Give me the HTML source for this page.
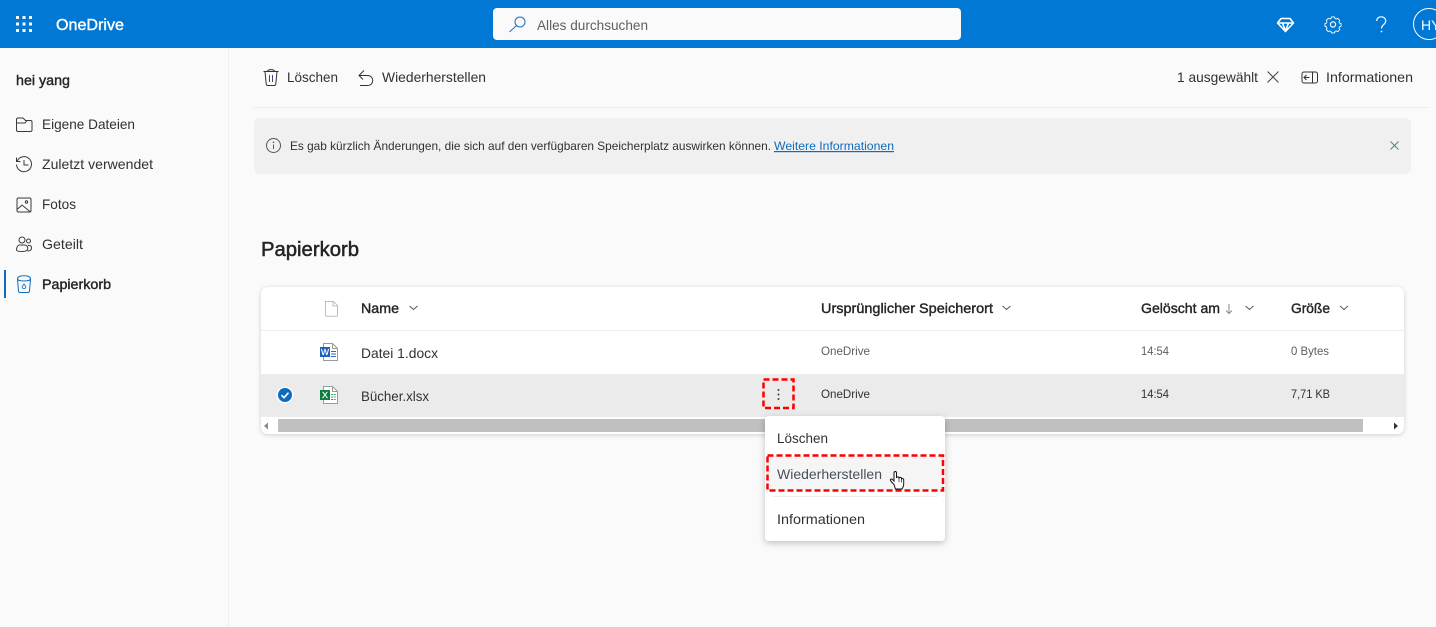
<!DOCTYPE html>
<html lang="de">
<head>
<meta charset="utf-8">
<title>OneDrive</title>
<style>
html,body{margin:0;padding:0;width:1436px;height:627px;overflow:hidden;background:#fafafa}
svg{display:block}
text{font-family:"Liberation Sans",sans-serif;font-size:14px;fill:#323130}
.b{fill:#252423;stroke:#252423;stroke-width:.4}
.s{font-size:12px;fill:#605e5c}
.ic{fill:none;stroke:#323130;stroke-width:1}
.nav{fill:none;stroke:#3b3a39;stroke-width:1}
</style>
</head>
<body>
<svg width="1436" height="627" viewBox="0 0 1436 627" xmlns="http://www.w3.org/2000/svg">
<defs>
<filter id="sh" x="-5%" y="-10%" width="110%" height="125%"><feDropShadow dx="0" dy="1" stdDeviation="2" flood-color="#000" flood-opacity=".18"/></filter>
<filter id="sh2" x="-10%" y="-10%" width="120%" height="125%"><feDropShadow dx="0" dy="2" stdDeviation="3.5" flood-color="#000" flood-opacity=".24"/></filter>
</defs>
<rect width="1436" height="627" fill="#fafafa"/>
<rect x="228" y="48" width="1" height="579" fill="#efefef"/>

<!-- Header -->
<rect width="1436" height="48" fill="#0078d4"/>
<g fill="#fff">
<rect x="16" y="16" width="3" height="3"/><rect x="22.500" y="16" width="3" height="3"/><rect x="29" y="16" width="3" height="3"/>
<rect x="16" y="22.500" width="3" height="3"/><rect x="22.500" y="22.500" width="3" height="3"/><rect x="29" y="22.500" width="3" height="3"/>
<rect x="16" y="29" width="3" height="3"/><rect x="22.500" y="29" width="3" height="3"/><rect x="29" y="29" width="3" height="3"/>
</g>
<text x="56" y="30" style="font-size:16px;fill:#fff;stroke:#fff;stroke-width:.4" textLength="68" lengthAdjust="spacingAndGlyphs">OneDrive</text>
<rect x="493" y="8" width="468" height="32" rx="4" fill="#fafafa"/>
<g fill="none" stroke="#1b6ec2" stroke-width="1"><circle cx="520" cy="22" r="5"/><path d="M516.500 25.500 509.500 32"/></g>
<text x="537" y="30" style="fill:#5f5f5f" textLength="111" lengthAdjust="spacingAndGlyphs">Alles durchsuchen</text>
<g fill="none" stroke="#fff" stroke-width="1.600" stroke-linejoin="round">
<path d="M1281 18.500h9l3.500 4.500-8 8.500-8-8.500zM1278 23h15M1282.500 23l3 8 3-8"/>
</g>
<g fill="none" stroke="#fff" stroke-width="1.200" stroke-linejoin="round">
<path d="M1331 17.500h4l.6 2 1.700.8 1.900-1 2.700 2.800-1 1.800.7 1.800 2 .6v3.700l-2 .6-.7 1.700 1 1.900-2.700 2.700-1.900-1-1.700.7-.6 2h-4l-.6-2-1.700-.7-1.900 1-2.700-2.700 1-1.900-.7-1.700-2-.6v-3.700l2-.6.700-1.800-1-1.800 2.700-2.800 1.900 1 1.700-.8z" transform="translate(1333 24.500) scale(.76) translate(-1333 -27.500)"/>
<circle cx="1333" cy="24.500" r="2.600"/>
<path d="M1376.700 21c0-5.600 9-5.600 9 0 0 3.600-4.200 3.800-4.200 7.500"/>
</g>
<circle cx="1381.500" cy="31.500" r=".9" fill="#fff"/>
<circle cx="1429" cy="24" r="15.500" fill="none" stroke="#fff" stroke-width="1"/>
<text x="1421" y="30" style="font-size:14px;fill:#fff">HY</text>

<!-- Sidebar -->
<text x="16" y="85" class="b" textLength="54" lengthAdjust="spacingAndGlyphs">hei yang</text>
<g class="nav">
<path d="M16.500 119.500a1.500 1.500 0 0 1 1.500-1.500h5l2.500 2.500h5a1.500 1.500 0 0 1 1.500 1.500v8a1.500 1.500 0 0 1-1.500 1.500H18a1.500 1.500 0 0 1-1.500-1.500zM16.500 123h8.500l2-2.500"/>
<path d="M17.200 161a7.500 7.500 0 1 1-.7 3.500M16.500 157.500v4h4M24 160v5h4.500"/>
<rect x="17" y="198" width="14" height="14" rx="1.500"/><path d="M17 209.500l5-4.500 8.500 7"/><circle cx="26.500" cy="202" r="1.200"/>
<circle cx="22" cy="240" r="3"/><circle cx="28.500" cy="241" r="2"/><path d="M16.500 250c0-3 1.500-5 3-5h5.500c2 0 2.800 2 2.800 3.500 0 2-2 3-5.500 3s-5.800-.5-5.800-1.500zM28 245.500h1.500c1.300 0 2 1 2 2.500 0 2-1.500 3-4 3"/>
</g>
<g fill="none" stroke="#0f6cbd" stroke-width="1">
<path d="M17.500 279l1 12c.1 1 .9 1.500 1.700 1.500h7.600c.8 0 1.600-.5 1.700-1.500l1-12M17.500 279c0-2.600 3.500-3.300 6.500-3.300s6.500.7 6.500 3.300-13 2.600-13 0z"/>
<path d="M22 287l2-3 2 3-1 1.500h-2z" stroke-width=".8"/>
</g>
<rect x="4" y="270" width="2" height="28" fill="#0f6cbd"/>
<text x="42" y="129" textLength="93" lengthAdjust="spacingAndGlyphs">Eigene Dateien</text>
<text x="42" y="169" textLength="111" lengthAdjust="spacingAndGlyphs">Zuletzt verwendet</text>
<text x="42" y="209" textLength="34" lengthAdjust="spacingAndGlyphs">Fotos</text>
<text x="42" y="249" textLength="41" lengthAdjust="spacingAndGlyphs">Geteilt</text>
<text x="42" y="289" class="b" textLength="69" lengthAdjust="spacingAndGlyphs">Papierkorb</text>

<!-- Command bar -->
<g class="ic">
<path d="M263.500 71.500h15M267.500 71.500c0-2.500 7-2.500 7 0M265 71.500l1.200 12.500c.1.900.8 1.500 1.700 1.500h6.200c.9 0 1.600-.6 1.700-1.500l1.200-12.500"/>
<path d="M269.500 75v7M272.500 75v7" stroke="#5a3a7a"/>
<path d="M364 70.500l-5 5 4 4M359 75.500h8.500c7 0 7 10 0 10H360"/>
<path d="M1267.500 71.500l11 11M1278.500 71.500l-11 11" stroke="#444"/>
<rect x="1302" y="72" width="15.500" height="11" rx="2"/><path d="M1312.500 72v11M1309.500 77.500h-5M1306.500 75l-2.500 2.500 2.500 2.500"/>
</g>
<text x="287" y="82" textLength="51" lengthAdjust="spacingAndGlyphs">Löschen</text>
<text x="382" y="82" textLength="104" lengthAdjust="spacingAndGlyphs">Wiederherstellen</text>
<text x="1177" y="82" textLength="81" lengthAdjust="spacingAndGlyphs">1 ausgewählt</text>
<text x="1326" y="82" textLength="87" lengthAdjust="spacingAndGlyphs">Informationen</text>
<rect x="253" y="107" width="1176" height="1" fill="#ececec"/>

<!-- Message bar -->
<rect x="254" y="118" width="1157" height="56" rx="6" fill="#f0f0f0"/>
<circle cx="273.500" cy="145.500" r="7" fill="none" stroke="#555" stroke-width="1"/>
<path d="M273.500 144.500v4.500" stroke="#555" stroke-width="1"/><circle cx="273.500" cy="142.300" r=".8" fill="#555"/>
<text x="290" y="150" style="font-size:12px" textLength="481" lengthAdjust="spacingAndGlyphs">Es gab kürzlich Änderungen, die sich auf den verfügbaren Speicherplatz auswirken können.</text>
<text x="774" y="150" style="font-size:12px;fill:#0f6cbd;text-decoration:underline" textLength="120" lengthAdjust="spacingAndGlyphs">Weitere Informationen</text>
<path d="M1390.500 141.500l8 8M1398.500 141.500l-8 8" stroke="#5d7f78" stroke-width="1" fill="none"/>

<!-- Title -->
<text x="261" y="256" class="b" style="font-size:20px;stroke-width:.5" textLength="98" lengthAdjust="spacingAndGlyphs">Papierkorb</text>

<!-- Table -->
<rect x="261" y="287" width="1143" height="147" rx="7" fill="#fff" filter="url(#sh)"/>
<rect x="261" y="330" width="1143" height="1" fill="#eeeeee"/>
<rect x="261" y="374" width="1143" height="43" fill="#ebebeb"/>
<rect x="278" y="419" width="1085" height="13" fill="#c0c0c0"/>
<path d="M268 422.500v7l-4-3.500z" fill="#8a8a8a"/>
<path d="M1394 422.500v7l4-3.500z" fill="#333"/>

<!-- File header icon -->
<path d="M325.500 301.500h8l4 4v10a.8.800 0 0 1-.8.800h-10.400a.8.800 0 0 1-.8-.800zM333 301.500v4.500h4.500" fill="#fff" stroke="#b8c4c0" stroke-width="1"/>
<text x="361" y="313" class="b" textLength="38" lengthAdjust="spacingAndGlyphs">Name</text>
<path d="M409.500 306l4 3.500 4-3.500" fill="none" stroke="#555" stroke-width="1"/>
<text x="821" y="313" class="b" textLength="172" lengthAdjust="spacingAndGlyphs">Ursprünglicher Speicherort</text>
<path d="M1002.500 306l4 3.500 4-3.500" fill="none" stroke="#555" stroke-width="1"/>
<text x="1141" y="313" class="b" textLength="79" lengthAdjust="spacingAndGlyphs">Gelöscht am</text>
<path d="M1229 304v9M1226 310.500l3 3 3-3" fill="none" stroke="#8a8a8a" stroke-width="1"/>
<path d="M1245.500 306l4 3.500 4-3.500" fill="none" stroke="#555" stroke-width="1"/>
<text x="1291" y="313" class="b" textLength="39" lengthAdjust="spacingAndGlyphs">Größe</text>
<path d="M1340 306l4 3.500 4-3.500" fill="none" stroke="#555" stroke-width="1"/>

<!-- Word row -->
<path d="M323.500 343.500h9l5 5v12h-14z" fill="#fff" stroke="#9a9a9a" stroke-width="1"/>
<path d="M332.500 343.500v5h5" fill="none" stroke="#9a9a9a" stroke-width="1"/>
<path d="M331 351.500h5M331 354h5M331 356.500h5" stroke="#2b6bc5" stroke-width="1"/>
<rect x="320" y="347" width="10" height="10" fill="#1f5fc0"/>
<text x="321" y="355" class="b" style="font-size:8px;fill:#fff;stroke:#fff;stroke-width:.2" textLength="8" lengthAdjust="spacingAndGlyphs">W</text>
<text x="361" y="358" textLength="77" lengthAdjust="spacingAndGlyphs">Datei 1.docx</text>
<text x="821" y="355" class="s" textLength="49" lengthAdjust="spacingAndGlyphs">OneDrive</text>
<text x="1141" y="355" class="s" textLength="28" lengthAdjust="spacingAndGlyphs">14:54</text>
<text x="1291" y="355" class="s" textLength="38" lengthAdjust="spacingAndGlyphs">0 Bytes</text>

<!-- Excel row -->
<circle cx="285" cy="395" r="8.500" fill="#fff"/>
<circle cx="285" cy="395" r="7" fill="#0f6cbd"/>
<path d="M281.500 395.200l2.500 2.500 4.500-5" fill="none" stroke="#fff" stroke-width="1.600"/>
<path d="M323.500 386.500h9l5 5v12h-14z" fill="#fff" stroke="#9a9a9a" stroke-width="1"/>
<path d="M332.500 386.500v5h5" fill="none" stroke="#9a9a9a" stroke-width="1"/>
<path d="M331 394.500h5M331 397h5M331 399.500h5" stroke="#3ea06c" stroke-width="1" stroke-dasharray="2 .7"/>
<rect x="320" y="390" width="10" height="10" fill="#107c41"/>
<text x="322" y="398" class="b" style="font-size:8px;fill:#fff;stroke:#fff;stroke-width:.2" textLength="6" lengthAdjust="spacingAndGlyphs">X</text>
<text x="361" y="401" textLength="68" lengthAdjust="spacingAndGlyphs">Bücher.xlsx</text>
<text x="821" y="398" class="s" style="fill:#323130" textLength="49" lengthAdjust="spacingAndGlyphs">OneDrive</text>
<text x="1141" y="398" class="s" style="fill:#323130" textLength="28" lengthAdjust="spacingAndGlyphs">14:54</text>
<text x="1291" y="398" class="s" style="fill:#323130" textLength="39" lengthAdjust="spacingAndGlyphs">7,71 KB</text>

<!-- More button -->
<g fill="#3d3d5c"><circle cx="778.500" cy="390" r="1"/><circle cx="778.500" cy="394.500" r="1"/><circle cx="778.500" cy="399" r="1"/></g>
<rect x="763.500" y="379.500" width="30" height="28.500" fill="none" stroke="#f00" stroke-width="2.500" stroke-dasharray="6 3"/>

<!-- Menu -->
<rect x="765" y="416" width="180" height="125" rx="4" fill="#fff" filter="url(#sh2)"/>
<rect x="766" y="456" width="178" height="34" fill="#f5f5f5"/>
<rect x="773" y="496" width="164" height="1" fill="#ececec"/>
<text x="777" y="443" textLength="51" lengthAdjust="spacingAndGlyphs">Löschen</text>
<text x="777" y="479" style="fill:#484f5c" textLength="105" lengthAdjust="spacingAndGlyphs">Wiederherstellen</text>
<text x="777" y="524" textLength="88" lengthAdjust="spacingAndGlyphs">Informationen</text>
<rect x="767.500" y="455.500" width="175.500" height="35" fill="none" stroke="#f00" stroke-width="2.500" stroke-dasharray="6 3"/>

<!-- Hand cursor -->
<path d="M894 484.500c-1.500-1.500-3-3-3.500-4-.5-1.500 1-2 2-1l1.500 1.500v-8c0-2 2.500-2 2.500 0v5c0-1.500 2.500-1.500 2.500 0v.500c0-1.500 2.500-1.500 2.500 0v1c0-1.300 2.200-1.300 2.200.3v4.200c0 2-.8 3.500-1.700 5h-6.500z" fill="#fff" stroke="#111" stroke-width="1"/>
<path d="M899 478v4M901.500 478.500v4" stroke="#111" stroke-width=".7"/>
</svg>
</body>
</html>
